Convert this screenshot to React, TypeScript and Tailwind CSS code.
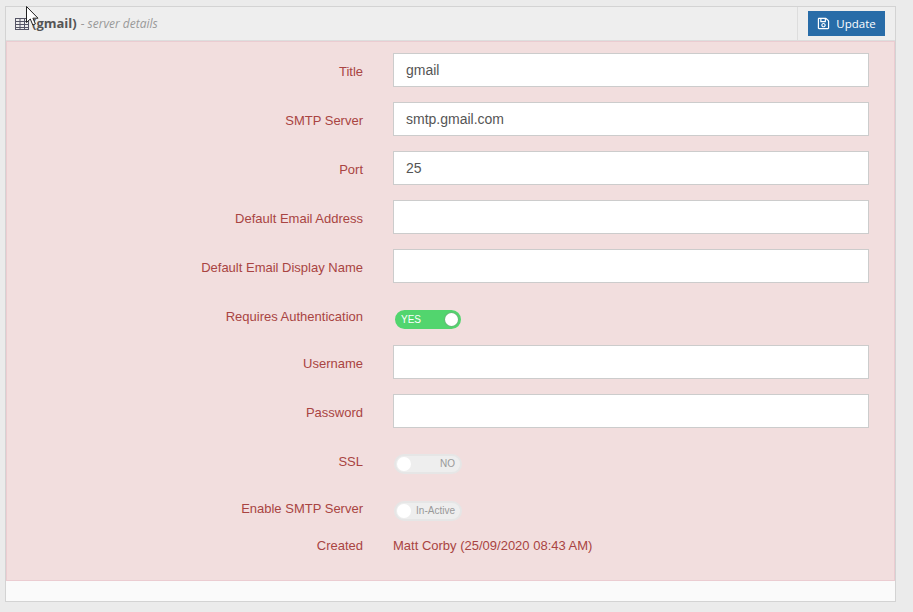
import { FaRegSave } from 'react-icons/fa'

const Field = ({ label, value = '' }: { label: string; value?: string }) => (
  <div className="flex items-center mb-[15px]">
    <label className="w-[356px] text-right text-[13px] text-[#a94442] mt-[4px]">{label}</label>
    <input
      readOnly
      value={value}
      className="ml-[30px] w-[476px] h-[34px] bg-white border border-[#ccc] px-3 text-[14px] text-[#555] outline-none"
    />
  </div>
)

const Toggle = ({ on, text }: { on?: boolean; text: string }) => (
  <div
    className={`relative rounded-full border-2 ${
      on ? 'w-[66px] h-[19px] mt-[1px] ml-[1px] bg-[#52d56e] border-[#52d56e]' : 'w-[68px] h-[20px] bg-[#eee] border-[#e6e6e6]'
    }`}
  >
    <span
      className={`absolute top-1/2 -translate-y-1/2 leading-none text-[10px] ${
        on ? 'left-[4px] text-white' : 'right-[5px] text-[#999]'
      }`}
    >
      {text}
    </span>
    <span
      className={`absolute top-[1px] rounded-full bg-white ${
        on ? 'right-[1px] w-[13px] h-[13px] shadow-[0_0_2px_#888]' : 'left-[1px] w-[14px] h-[14px]'
      }`}
    />
  </div>
)

const ToggleRow = ({ label, mb, children }: { label: string; mb: string; children: React.ReactNode }) => (
  <div className={`flex items-center ${mb}`}>
    <label className="w-[356px] text-right text-[13px] text-[#a94442] -mt-[5px]">{label}</label>
    <div className="ml-[31px]">{children}</div>
  </div>
)

export default function App() {
  return (
    <div className="relative w-[913px] h-[612px] overflow-hidden bg-[#ebebeb] pt-[6px] pl-[5px] font-['Liberation_Sans',sans-serif]">
      <div className="w-[891px] h-[596px] flex flex-col border border-[#d3d3d3] bg-[#fafafa]">
        {/* Header */}
        <div className="flex items-stretch justify-between h-[34px] shrink-0 bg-[#eee] border-b border-[#ddd]">
          <div className="flex items-center pl-[9px] pt-[1px]">
            <svg width="14" height="12" viewBox="0 0 14 12" fill="none" stroke="#556" strokeWidth="1">
              <rect x="0.5" y="0.5" width="13" height="11" />
              <path d="M0 3.5h14M0 6.5h14M0 9.5h14M5 1v11M9.5 1v11" />
            </svg>
            <span className="ml-[3px] text-[13px] font-bold text-[#555] font-['Open_Sans',sans-serif]">(gmail)</span>
            <span className="ml-[4px] text-[12px] italic text-[#999] font-['Open_Sans',sans-serif]">- server details</span>
          </div>
          <div className="flex items-center w-[98px] border-l border-[#ddd] pl-[10px]">
            <button className="flex items-center justify-center w-[77px] h-[25px] bg-[#286ca8] text-white text-[11.5px] font-['Open_Sans',sans-serif]">
              <FaRegSave className="w-[13px] h-[13px] mr-[6px]" />
              Update
            </button>
          </div>
        </div>

        {/* Form */}
        <div className="h-[540px] shrink-0 bg-[#f2dede] border border-[#ebccd1] pt-[11px]">
          <Field label="Title" value="gmail" />
          <Field label="SMTP Server" value="smtp.gmail.com" />
          <Field label="Port" value="25" />
          <Field label="Default Email Address" />
          <Field label="Default Email Display Name" />
          <div className="h-[11px]" />
          <ToggleRow label="Requires Authentication" mb="mb-[16px]">
            <Toggle on text="YES" />
          </ToggleRow>
          <Field label="Username" />
          <Field label="Password" />
          <div className="h-[11px]" />
          <ToggleRow label="SSL" mb="mb-[27px]">
            <Toggle text="NO" />
          </ToggleRow>
          <ToggleRow label="Enable SMTP Server" mb="mb-[15px]">
            <Toggle text="In-Active" />
          </ToggleRow>
          <div className="flex items-center text-[13px] text-[#a94442]">
            <span className="w-[356px] text-right">Created</span>
            <span className="ml-[30px]">Matt Corby (25/09/2020 08:43 AM)</span>
          </div>
        </div>
      </div>

      {/* Mouse cursor */}
      <svg className="absolute left-[26px] top-[6px]" width="13" height="20" viewBox="0 0 13 20">
        <path d="M0.5 0.5V16.5L4.3 13L6.8 19L9.4 17.9L6.9 12.2H12L0.5 0.5Z" fill="#fff" stroke="#222" strokeWidth="1" />
      </svg>
    </div>
  )
}
